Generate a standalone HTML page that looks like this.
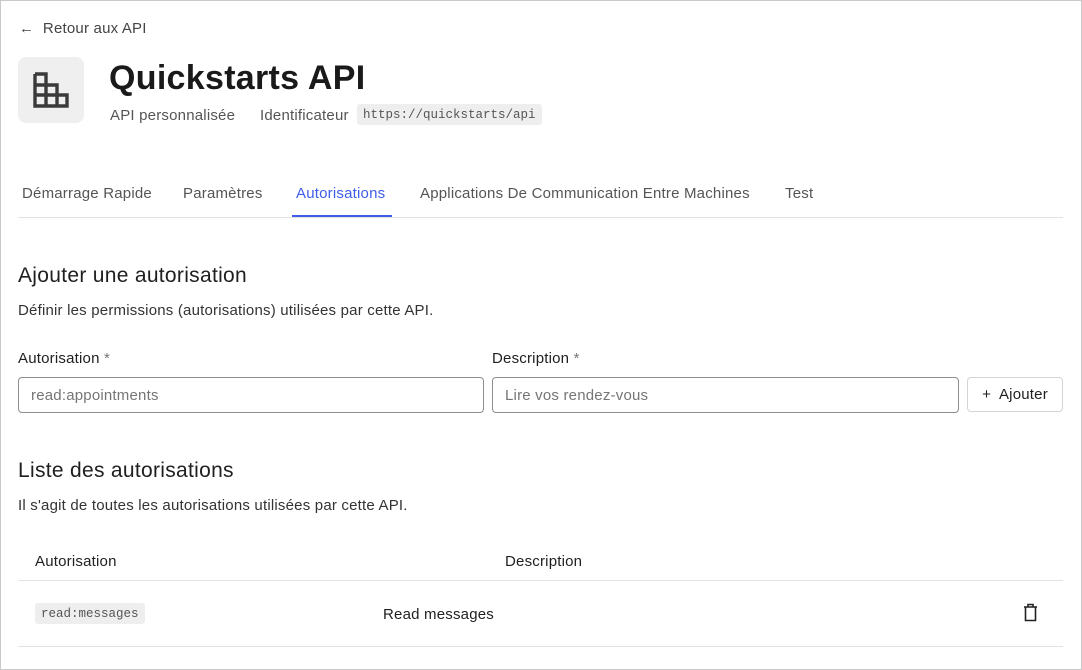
<!DOCTYPE html>
<html><head><meta charset="utf-8"><style>
*{box-sizing:border-box;margin:0;padding:0}
html,body{width:1082px;height:670px;overflow:hidden;background:#fff}
body{font-family:"Liberation Sans",sans-serif;color:#1f1f1f;position:relative}
.frame{position:absolute;left:0;top:0;width:1082px;height:670px;border:1px solid #c9c9c9}
.a{position:absolute;white-space:nowrap}
.t{letter-spacing:.2px}
.mono{font-family:"Liberation Mono",monospace}
.code{background:#eeeeee;border-radius:3px;color:#555;font-size:12.5px}
input{position:absolute;height:36px;border:1px solid #8e8e8e;border-radius:4px;font:15px "Liberation Sans",sans-serif;padding:0 12px;color:#999;letter-spacing:.2px}
.line{position:absolute;left:18px;width:1045px;height:1px;background:#e2e2e2}
</style></head><body>
<div class="frame"></div>
<div class="a t" style="left:19px;top:20px;font-size:15px;color:#444">←&nbsp;&nbsp;Retour aux API</div>
<div class="a" style="left:18px;top:57px;width:66px;height:66px;background:#efefef;border-radius:8px"></div>
<svg class="a" style="left:33px;top:72px" width="36" height="36" viewBox="0 0 36 36" fill="none" stroke="#3a3a3a" stroke-width="3.4">
<path d="M2 2h11v32M2 2v32h32v-11h-32M2 13h22v21M24 23v11"/></svg>
<div class="a" style="left:109px;top:59px;font-size:34px;font-weight:600;color:#1a1a1a;letter-spacing:.3px">Quickstarts API</div>
<div class="a t" style="left:110px;top:107px;font-size:15px;color:#555">API personnalisée</div>
<div class="a t" style="left:260px;top:107px;font-size:15px;color:#555">Identificateur</div>
<div class="a mono code" style="left:357px;top:104px;height:21px;line-height:22px;padding:0 6px">https://quickstarts/api</div>
<div class="a t" style="left:22px;top:185px;font-size:15px;color:#555">Démarrage Rapide</div>
<div class="a t" style="left:183px;top:185px;font-size:15px;color:#555">Paramètres</div>
<div class="a t" style="left:296px;top:185px;font-size:15px;color:#3f5ee8">Autorisations</div>
<div class="a t" style="left:420px;top:185px;font-size:15px;color:#555">Applications De Communication Entre Machines</div>
<div class="a t" style="left:785px;top:185px;font-size:15px;color:#555">Test</div>
<div class="line" style="top:217px"></div>
<div class="a" style="left:292px;top:215px;width:100px;height:2px;background:#3f5ee8"></div>
<div class="a" style="left:18px;top:264px;font-size:21px;font-weight:500;letter-spacing:.3px">Ajouter une autorisation</div>
<div class="a t" style="left:18px;top:302px;font-size:15px;color:#333">Définir les permissions (autorisations) utilisées par cette API.</div>
<div class="a t" style="left:18px;top:350px;font-size:15px">Autorisation <span style="color:#777">*</span></div>
<div class="a t" style="left:492px;top:350px;font-size:15px">Description <span style="color:#777">*</span></div>
<input style="left:18px;top:377px;width:466px" placeholder="read:appointments">
<input style="left:492px;top:377px;width:467px" placeholder="Lire vos rendez-vous">
<div class="a t" style="left:967px;top:377px;width:96px;height:35px;border:1px solid #d4d4d4;border-radius:4px;font-size:15px;line-height:34px;text-align:center">+&nbsp; Ajouter</div>
<div class="a" style="left:18px;top:459px;font-size:21px;font-weight:500;letter-spacing:.3px">Liste des autorisations</div>
<div class="a t" style="left:18px;top:497px;font-size:15px;color:#333">Il s'agit de toutes les autorisations utilisées par cette API.</div>
<div class="a t" style="left:35px;top:553px;font-size:15px">Autorisation</div>
<div class="a t" style="left:505px;top:553px;font-size:15px">Description</div>
<div class="line" style="top:580px"></div>
<div class="a mono code" style="left:35px;top:603px;height:21px;line-height:22px;padding:0 6px">read:messages</div>
<div class="a t" style="left:383px;top:606px;font-size:15px">Read messages</div>
<svg class="a" style="left:1023px;top:603px" width="15" height="19" viewBox="0 0 15 19" fill="none" stroke="#222" stroke-width="1.6"><path d="M1 4h13M5 4V1.5h5V4M2.5 4v13.5h10V4"/></svg>
<div class="line" style="top:646px"></div>
</body></html>
